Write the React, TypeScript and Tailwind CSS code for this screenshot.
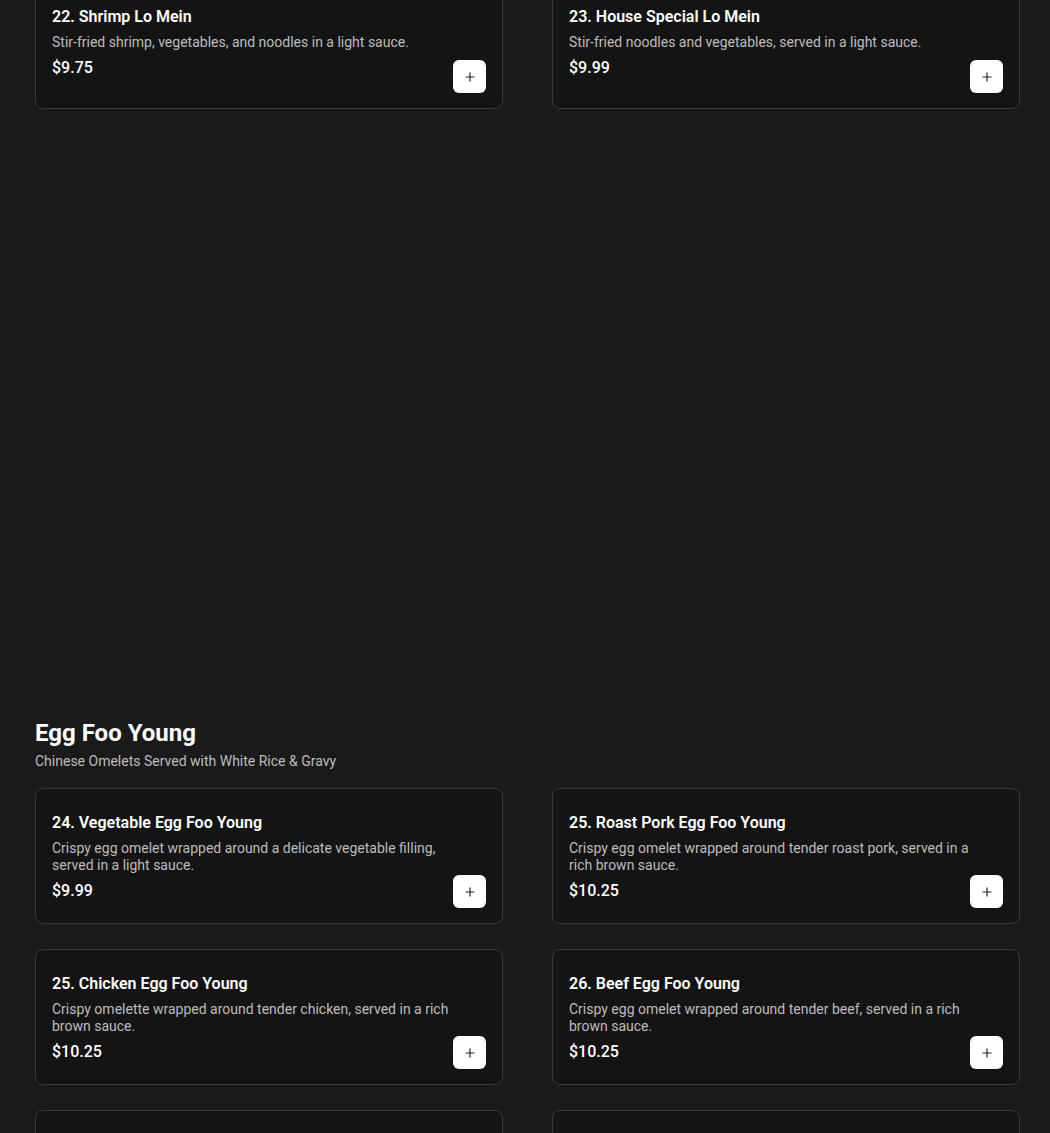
import React from 'react'
import { Plus } from 'lucide-react'

interface MenuItem {
  id: string
  name: string
  description: string
  price: string
}

const loMein: MenuItem[] = [
  { id: 'lm22', name: '22. Shrimp Lo Mein', description: 'Stir-fried shrimp, vegetables, and noodles in a light sauce.', price: '$9.75' },
  { id: 'lm23', name: '23. House Special Lo Mein', description: 'Stir-fried noodles and vegetables, served in a light sauce.', price: '$9.99' },
]

const eggFooYoung: MenuItem[] = [
  { id: 'efy24', name: '24. Vegetable Egg Foo Young', description: 'Crispy egg omelet wrapped around a delicate vegetable filling, served in a light sauce.', price: '$9.99' },
  { id: 'efy25a', name: '25. Roast Pork Egg Foo Young', description: 'Crispy egg omelet wrapped around tender roast pork, served in a rich brown sauce.', price: '$10.25' },
  { id: 'efy25b', name: '25. Chicken Egg Foo Young', description: 'Crispy omelette wrapped around tender chicken, served in a rich brown sauce.', price: '$10.25' },
  { id: 'efy26', name: '26. Beef Egg Foo Young', description: 'Crispy egg omelet wrapped around tender beef, served in a rich brown sauce.', price: '$10.25' },
  { id: 'efy27', name: '27. Shrimp Egg Foo Young', description: 'Crispy egg omelet wrapped around tender shrimp, served in a rich brown sauce.', price: '$10.75' },
  { id: 'efy28', name: '28. House Special Egg Foo Young', description: 'Crispy egg omelet with shrimp, chicken and pork, served in a rich brown sauce.', price: '$10.99' },
]

function ItemCard({ item }: { item: MenuItem }) {
  return (
    <div className="relative h-[136px] flex items-center px-4 pt-[2px] rounded-lg border border-[#3a3a3a] bg-[#141414]">
      <div className="w-full pr-8">
        <h4 className="text-[16px] leading-6 font-semibold text-white">{item.name}</h4>
        <p className="mt-[5px] text-[14px] leading-[17px] text-[#bdbdbd]">{item.description}</p>
        <div className="mt-[5px] text-[16px] leading-6 font-medium text-white">{item.price}</div>
      </div>
      <button className="absolute right-4 bottom-[15px] w-[33px] h-[33px] rounded-md bg-white flex items-center justify-center">
        <Plus className="w-3.5 h-3.5 text-[#222]" strokeWidth={2} />
      </button>
    </div>
  )
}

export default function App() {
  return (
    <div className="min-h-screen bg-[#1a1a1a] overflow-hidden" style={{ fontFamily: 'Roboto, "Liberation Sans", sans-serif' }}>
      <div className="pl-[35px] pr-[30px] -mt-[27px]">

        {/* Lo Mein (scrolled) */}
        <div className="grid grid-cols-2 gap-x-[49px] gap-y-[25px]">
          {loMein.map(item => <ItemCard key={item.id} item={item} />)}
        </div>

        {/* Egg Foo Young */}
        <div className="mt-[608px]">
          <h2 className="text-[24px] leading-8 font-bold text-white">Egg Foo Young</h2>
          <p className="mt-[2px] text-[14px] leading-5 text-[#bdbdbd]">Chinese Omelets Served with White Rice & Gravy</p>
          <div className="mt-[17px] grid grid-cols-2 gap-x-[49px] gap-y-[25px]">
            {eggFooYoung.map(item => <ItemCard key={item.id} item={item} />)}
          </div>
        </div>

      </div>
    </div>
  )
}
